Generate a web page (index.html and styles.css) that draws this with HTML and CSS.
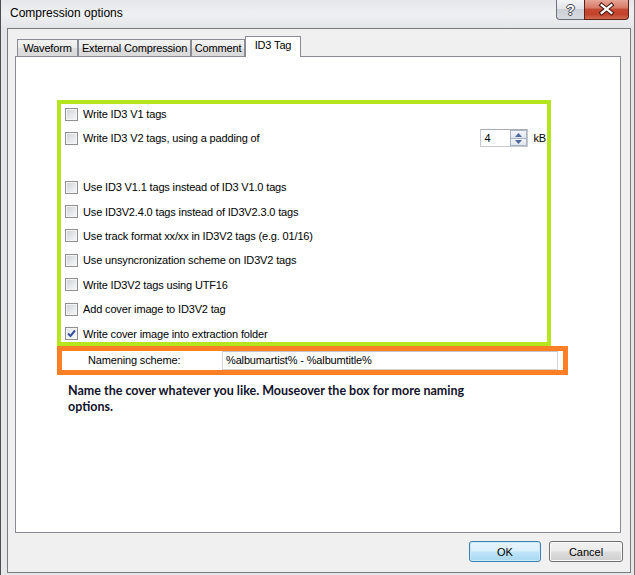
FILE: index.html
```html
<!DOCTYPE html>
<html>
<head>
<meta charset="utf-8">
<title>Compression options</title>
<link rel="stylesheet" href="styles.css">
</head>
<body>
<div class="window">
  <div class="titlebar">
    <span class="title">Compression options</span>
    <div class="caption-btns">
      <div class="cap help">?</div>
      <div class="cap close">
        <svg width="44" height="19" viewBox="0 0 44 19">
          <path d="M17 5 L27 13 M27 5 L17 13" stroke="#4b1a12" stroke-width="4.4" stroke-linecap="square" fill="none"/>
          <path d="M17 5 L27 13 M27 5 L17 13" stroke="#ffffff" stroke-width="2.2" stroke-linecap="square" fill="none"/>
        </svg>
      </div>
    </div>
  </div>
  <div class="client">
    <div class="tabstrip">
      <div class="tab t1">Waveform</div>
      <div class="tab t2">External Compression</div>
      <div class="tab t3">Comment</div>
      <div class="tab t4 sel">ID3 Tag</div>
    </div>
    <div class="panel">
      <div class="green">
        <div class="row"><span class="cb"></span><span>Write ID3 V1 tags</span></div>
        <div class="row"><span class="cb"></span><span>Write ID3 V2 tags, using a padding of</span>
          <div class="spin">
            <span class="spin-val">4</span>
            <span class="spin-btns">
              <span class="sb up"><svg width="7" height="4" viewBox="0 0 7 4"><path d="M0 4 L3.5 0 L7 4 Z" fill="#4d6a9a"/></svg></span>
              <span class="sb down"><svg width="7" height="4" viewBox="0 0 7 4"><path d="M0 0 L3.5 4 L7 0 Z" fill="#4d6a9a"/></svg></span>
            </span>
          </div>
          <span class="kb">kB</span>
        </div>
        <div class="row"></div>
        <div class="row"><span class="cb"></span><span>Use ID3 V1.1 tags instead of ID3 V1.0 tags</span></div>
        <div class="row"><span class="cb"></span><span>Use ID3V2.4.0 tags instead of ID3V2.3.0 tags</span></div>
        <div class="row"><span class="cb"></span><span>Use track format xx/xx in ID3V2 tags (e.g. 01/16)</span></div>
        <div class="row"><span class="cb"></span><span>Use unsyncronization scheme on ID3V2 tags</span></div>
        <div class="row"><span class="cb"></span><span>Write ID3V2 tags using UTF16</span></div>
        <div class="row"><span class="cb"></span><span>Add cover image to ID3V2 tag</span></div>
        <div class="row"><span class="cb checked"><svg width="11" height="11" viewBox="0 0 11 11"><path d="M2 5.5 L4.5 8 L9 2.5" stroke="#3a50a0" stroke-width="2" fill="none"/></svg></span><span>Write cover image into extraction folder</span></div>
      </div>
      <div class="orange">
        <span class="nlabel">Namening scheme:</span>
        <div class="textbox">%albumartist% - %albumtitle%</div>
      </div>
      <p class="note">Name the cover whatever you like. Mouseover the box for more naming<br>options.</p>
    </div>
    <div class="buttons">
      <div class="btn ok">OK</div>
      <div class="btn cancel">Cancel</div>
    </div>
  </div>
</div>
</body>
</html>
```

FILE: styles.css
```css
* { box-sizing: border-box; }

body {
  margin: 0;
  background: #ffffff;
  font-family: "Liberation Sans", Arial, sans-serif;
  font-size: 11px;
  letter-spacing: -0.15px;
  color: #000;
}

.window {
  width: 635px;
  height: 575px;
  background: linear-gradient(180deg, #e4e6e9 0, #eff0f2 14px, #e3e5e8 28px, #e6e7e9 100%);
  border-left: 1px solid #4e4e4e;
  border-right: 1px solid #777;
  display: flex;
  flex-direction: column;
  overflow: hidden;
}

.titlebar {
  height: 28px;
  flex: none;
  display: flex;
  align-items: flex-start;
}

.title {
  font-size: 12px;
  line-height: 14px;
  letter-spacing: 0;
  padding: 6px 0 0 9px;
  color: #000;
}

.caption-btns {
  margin-left: auto;
  margin-right: 5px;
  display: flex;
}

.cap {
  height: 20px;
  display: flex;
  align-items: center;
  justify-content: center;
}

.help {
  width: 28px;
  border: 1px solid #6d7179;
  border-top: none;
  border-right: none;
  border-radius: 0 0 0 4px;
  background: linear-gradient(180deg, #f3f4f6 0, #e1e4e8 45%, #cdd1d7 50%, #d6d9de 100%);
  color: #fff;
  font-weight: bold;
  font-size: 14px;
  letter-spacing: 0;
  text-shadow: 1px 0 0 #3e4248, -1px 0 0 #3e4248, 0 1px 0 #3e4248, 0 -1px 0 #3e4248;
}

.close {
  width: 45px;
  border: 1px solid #5b2219;
  border-top: none;
  border-radius: 0 0 4px 0;
  background: linear-gradient(180deg, #e6a597 0, #d77c68 40%, #c54a33 50%, #c3412a 75%, #d06a52 100%);
}

.client {
  margin-left: 6px;
  width: 624px;
  height: 545px;
  flex: none;
  border: 1px solid #7a7a7a;
  background: #f0f0f0;
  padding: 7px 0 0 7px;
}

.tabstrip {
  display: flex;
  align-items: flex-end;
  height: 20px;
  padding-left: 2px;
}

.tab {
  height: 17px;
  line-height: 16px;
  text-align: center;
  border: 1px solid #898c95;
  border-bottom: none;
  background: linear-gradient(180deg, #f3f3f3 0, #ebebeb 50%, #dedede 52%, #dadada 100%);
  white-space: nowrap;
}

.t1 { width: 61px; }
.t2 { width: 113px; }
.t3 { width: 54px; }
.t4 { width: 56px; }

.tab.sel {
  height: 21px;
  line-height: 17px;
  padding-bottom: 4px;
  margin-bottom: -1px;
  background: #fff;
  position: relative;
  z-index: 1;
}

.panel {
  width: 606px;
  height: 477px;
  border: 1px solid #898c95;
  background: #fff;
  display: flex;
  flex-direction: column;
  align-items: flex-start;
  padding: 43px 0 0 41px;
}

.green {
  width: 494px;
  border: 4px solid #b5e61d;
  padding: 2px 0 0 4px;
  display: flex;
  flex-direction: column;
  gap: 8.4px;
}

.row {
  height: 16px;
  display: flex;
  align-items: center;
  white-space: nowrap;
}

.cb {
  width: 13px;
  height: 13px;
  flex: none;
  margin-right: 5px;
  border: 1px solid #8e8f8f;
  background: linear-gradient(135deg, #cbcfd5 0, #e6e8ea 55%, #f7f7f7 100%);
  box-shadow: inset 0 0 0 1px #f4f4f4;
  display: flex;
  align-items: center;
  justify-content: center;
}

.cb.checked {
  background: linear-gradient(135deg, #dfe4ec 0, #f0f2f5 55%, #fafafa 100%);
}

.spin {
  margin-left: auto;
  width: 48px;
  height: 18px;
  display: flex;
  border: 1px solid #c5c8ce;
  border-top-color: #abadb3;
  background: #fff;
}

.spin-val {
  flex: 1;
  padding-left: 3px;
  line-height: 16px;
}

.spin-btns {
  width: 17px;
  display: flex;
  flex-direction: column;
}

.sb {
  flex: 1;
  display: flex;
  align-items: center;
  justify-content: center;
  border: 1px solid #a8b4c6;
  background: linear-gradient(180deg, #f2f5f9 0, #dfe6ee 100%);
}

.sb.down { border-top: none; }

.kb {
  margin: 0 1px 0 5px;
}

.orange {
  width: 511px;
  height: 29px;
  border: 5px solid #ff7f27;
  display: flex;
  align-items: stretch;
  padding-left: 26px;
}

.nlabel {
  width: 134px;
  display: flex;
  align-items: center;
}

.textbox {
  width: 336px;
  border: 1px solid #d3d5d9;
  border-top-color: #c3c5ca;
  padding-left: 3px;
  line-height: 17px;
  white-space: nowrap;
}

.note {
  margin: 8px 0 0 11px;
  font-family: Lato, "Liberation Sans", sans-serif;
  font-weight: bold;
  font-size: 12.5px;
  letter-spacing: 0;
  line-height: 16px;
  color: #10122a;
}

.buttons {
  display: flex;
  justify-content: flex-end;
  gap: 8px;
  padding-right: 7px;
  margin-top: 8px;
}

.btn {
  height: 21px;
  display: flex;
  align-items: center;
  justify-content: center;
  border: 1px solid #707070;
  border-radius: 3px;
  background: linear-gradient(180deg, #f2f2f2 0, #ebebeb 48%, #dddddd 52%, #cfcfcf 100%);
  box-shadow: inset 0 0 0 1px #fbfbfb;
  font-size: 11px;
  letter-spacing: 0;
}

.ok {
  width: 72px;
  border-color: #3c7fb1;
  background: linear-gradient(180deg, #e9f5fc 0, #d9effb 48%, #bfe4f9 52%, #a9d7f2 100%);
  box-shadow: inset 0 0 0 1px #c6ebfb;
}

.cancel {
  width: 74px;
}
```
